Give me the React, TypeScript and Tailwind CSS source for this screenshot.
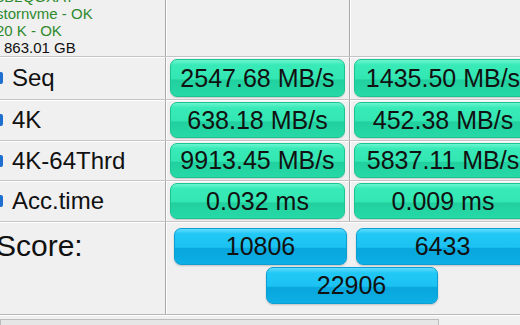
import React from 'react';

const font = { fontFamily: '"Liberation Sans", Arial, sans-serif' };

const rows = [
  { label: 'Seq', read: '2547.68 MB/s', write: '1435.50 MB/s', h: 'h-[43px]' },
  { label: '4K', read: '638.18 MB/s', write: '452.38 MB/s', h: 'h-[41px]' },
  { label: '4K-64Thrd', read: '9913.45 MB/s', write: '5837.11 MB/s', h: 'h-[40px]' },
  { label: 'Acc.time', read: '0.032 ms', write: '0.009 ms', h: 'h-[41px]' },
];

function GreenBox({ value }: { value: string }) {
  return (
    <div className="flex h-full items-center justify-center rounded-[7px] border border-[#1cc492] bg-[linear-gradient(to_bottom,#6cf5d0_0%,#38eab7_14%,#33e7b3_52%,#22d09f_56%,#27d9a8_100%)] text-[25px] leading-none text-[#111] shadow-[0_1px_1px_rgba(0,0,0,0.15)]">
      {value}
    </div>
  );
}

function BlueBox({ value }: { value: string }) {
  return (
    <div className="flex h-[37px] items-center justify-center rounded-[7px] border border-[#0b9fd3] bg-[linear-gradient(to_bottom,#5fdcff_0%,#22c8f5_14%,#1bc2f2_52%,#08a6dc_56%,#0cafe6_100%)] text-[25px] leading-none text-[#111] shadow-[0_1px_2px_rgba(0,0,0,0.2)]">
      {value}
    </div>
  );
}

export default function App() {
  return (
    <div className="h-[325px] w-[520px] overflow-hidden bg-[#f0f0f0]" style={font}>
      <div className="w-[536px]">
        {/* Header: drive info + empty column headers */}
        <div className="grid h-[57px] grid-cols-[166px_184px_186px] border-b border-[#c4c4c4]">
          <div className="overflow-hidden border-r border-[#a8a8a8]">
            <div className="-mt-[12px] -ml-[4px] flex flex-col text-[15px] leading-[17px]">
              <span className="text-[#2f8a2f]">3B2QGXA7</span>
              <span className="text-[#2f8a2f]">stornvme - OK</span>
              <span className="text-[#2f8a2f]">20 K - OK</span>
              <span className="pl-[8px] text-[#111]">863.01 GB</span>
            </div>
          </div>
          <div className="border-r border-[#a8a8a8] shadow-[inset_1px_0_0_#fff]" />
          <div className="shadow-[inset_1px_0_0_#fff]" />
        </div>

        {/* Result rows */}
        {rows.map((row) => (
          <div
            key={row.label}
            className={`grid grid-cols-[166px_184px_186px] border-b border-[#c4c4c4] shadow-[inset_0_1px_0_#fff] ${row.h}`}
          >
            <div className="flex items-center border-r border-[#a8a8a8]">
              <span className="-ml-[9px] mr-[9px] h-[12px] w-[12px] rounded-[2px] bg-[#1f6fd1]" />
              <span className="text-[24px] leading-none text-[#111]">{row.label}</span>
            </div>
            <div className="border-r border-[#a8a8a8] px-[4px] py-[2px] shadow-[inset_1px_0_0_#fff]">
              <GreenBox value={row.read} />
            </div>
            <div className="px-[4px] py-[2px] shadow-[inset_1px_0_0_#fff]">
              <GreenBox value={row.write} />
            </div>
          </div>
        ))}

        {/* Score */}
        <div className="grid h-[93px] grid-cols-[166px_370px] border-b border-[#b8b8b8] shadow-[inset_0_1px_0_#fff]">
          <div className="border-r border-[#a8a8a8] pt-[8px]">
            <span className="-ml-[4px] block text-[30px] leading-[32px] text-[#111]">Score:</span>
          </div>
          <div className="flex flex-col gap-[2px] pt-[6px] pl-[8px] pr-[7px] shadow-[inset_1px_0_0_#fff]">
            <div className="grid grid-cols-2 gap-[9px]">
              <BlueBox value="10806" />
              <BlueBox value="6433" />
            </div>
            <div className="flex justify-center">
              <div className="w-[172px]">
                <BlueBox value="22906" />
              </div>
            </div>
          </div>
        </div>

        {/* Progress bar */}
        <div className="pt-[4px] shadow-[inset_0_1px_0_#fff]">
          <div className="h-[14px] w-[439px] border border-[#bcbcbc] bg-[#e6e6e6]" />
        </div>
      </div>
    </div>
  );
}
